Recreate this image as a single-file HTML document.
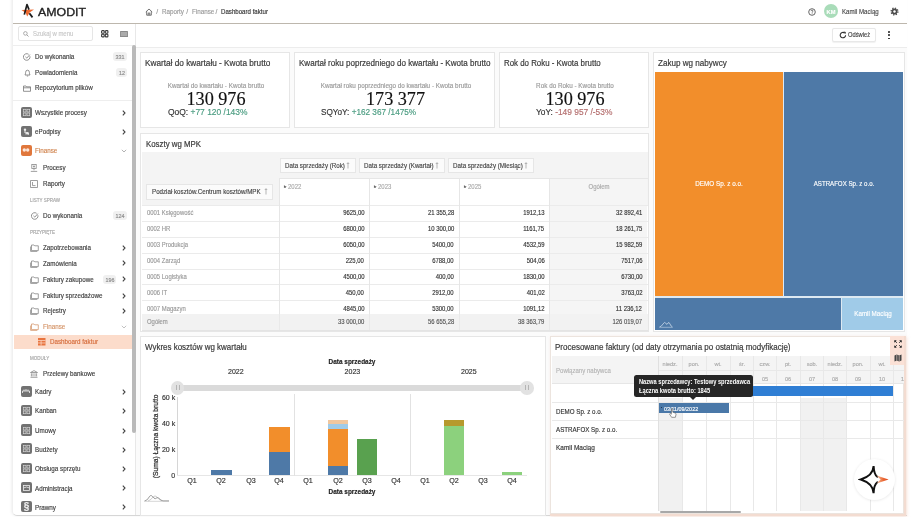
<!DOCTYPE html><html><head><meta charset="utf-8"><style>
html,body{margin:0;padding:0;width:920px;height:517px;overflow:hidden;background:#fff;font-family:"Liberation Sans",sans-serif;}
#root{position:relative;width:920px;height:517px;overflow:hidden;filter:blur(0.25px);}
#root div{-webkit-text-stroke:0.15px currentColor;}
</style></head><body><div id="root">
<div style="position:absolute;left:12px;top:-2px;width:895px;height:517.5px;background:#fff;border-left:1px solid #f0f0f0;border-bottom:1.2px solid #d6d6d6;border-radius:0 0 0 5px;box-sizing:border-box;box-shadow:-1px 0 2.5px rgba(0,0,0,0.06);"></div>
<div style="position:absolute;left:13px;top:22.9px;width:894px;height:1.1000000000000014px;background:#bdb7ad;"></div>
<svg style="position:absolute;left:18px;top:2px" width="18" height="18" viewBox="0 0 18 18">
<polygon points="3.4,8 16,7.4 11.6,10.6 9.2,14.4 7.6,10.8" fill="#ee6a30"/>
<path d="M6.3 12.6 L9 2.5 L11 7.6" stroke="#1d1d1d" stroke-width="1.7" fill="none" stroke-linejoin="round"/>
<path d="M11.4 11.3 L14.5 15.4" stroke="#1d1d1d" stroke-width="1.8" fill="none"/>
</svg>
<div style="position:absolute;left:37.6px;top:7.68px;font-size:10.3px;line-height:10.3px;color:#222;font-weight:400;white-space:nowrap;font-family:'Liberation Sans', sans-serif;transform:scaleX(1.2);transform-origin:left center;-webkit-text-stroke:0.3px #222;">AMODIT</div>
<svg style="position:absolute;left:144.5px;top:7.5px" width="8" height="8" viewBox="0 0 8 8">
<path d="M0.8 4 L4 1 L7.2 4 M1.7 3.3 V7.2 H6.3 V3.3 M3.2 7.2 V5 H4.8 V7.2" stroke="#666" stroke-width="0.9" fill="none"/></svg>
<div style="position:absolute;left:156.2px;top:8.68px;font-size:6.8px;line-height:6.8px;color:#9a9a9a;font-weight:400;white-space:nowrap;font-family:'Liberation Sans', sans-serif;">/</div>
<div style="position:absolute;left:161.8px;top:8.68px;font-size:6.8px;line-height:6.8px;color:#9a9a9a;font-weight:400;white-space:nowrap;font-family:'Liberation Sans', sans-serif;transform:scaleX(0.92);transform-origin:left center;">Raporty</div>
<div style="position:absolute;left:186.3px;top:8.68px;font-size:6.8px;line-height:6.8px;color:#9a9a9a;font-weight:400;white-space:nowrap;font-family:'Liberation Sans', sans-serif;">/</div>
<div style="position:absolute;left:191.7px;top:8.68px;font-size:6.8px;line-height:6.8px;color:#9a9a9a;font-weight:400;white-space:nowrap;font-family:'Liberation Sans', sans-serif;transform:scaleX(0.92);transform-origin:left center;">Finanse</div>
<div style="position:absolute;left:215.6px;top:8.68px;font-size:6.8px;line-height:6.8px;color:#9a9a9a;font-weight:400;white-space:nowrap;font-family:'Liberation Sans', sans-serif;">/</div>
<div style="position:absolute;left:220.7px;top:8.68px;font-size:6.8px;line-height:6.8px;color:#333;font-weight:400;white-space:nowrap;font-family:'Liberation Sans', sans-serif;transform:scaleX(0.9);transform-origin:left center;">Dashboard faktur</div>
<svg style="position:absolute;left:808px;top:7.5px" width="8" height="8" viewBox="0 0 8 8">
<circle cx="4" cy="4" r="3.3" stroke="#555" stroke-width="0.9" fill="none"/><path d="M3 3.1 Q3 2.2 4 2.2 Q5 2.2 5 3 Q5 3.6 4.2 4 V4.6" stroke="#555" stroke-width="0.8" fill="none"/><circle cx="4.1" cy="5.8" r="0.45" fill="#555"/></svg>
<div style="position:absolute;left:823.8px;top:4.3px;width:14.0px;height:14.0px;background:#a9dcb9;border-radius:50%;"></div>
<div style="position:absolute;left:830.8px;top:8.90px;font-size:6px;line-height:6px;color:#fff;font-weight:700;white-space:nowrap;font-family:'Liberation Sans', sans-serif;transform:translateX(-50%) scaleX(0.95);">KM</div>
<div style="position:absolute;left:842px;top:8.88px;font-size:6.8px;line-height:6.8px;color:#4a4a4a;font-weight:400;white-space:nowrap;font-family:'Liberation Sans', sans-serif;transform:scaleX(0.9);transform-origin:left center;">Kamil Maciąg</div>
<svg style="position:absolute;left:890px;top:7.4px" width="9" height="9" viewBox="0 0 9 9"><circle cx="4.5" cy="4.5" r="3.4" fill="none" stroke="#4a4a4a" stroke-width="1.3" stroke-dasharray="1.3 1.37"/><circle cx="4.5" cy="4.5" r="2.9" fill="#4a4a4a"/><circle cx="4.5" cy="4.5" r="1.2" fill="#fff"/></svg>
<div style="position:absolute;left:17.5px;top:26.3px;width:75.5px;height:14.7px;border:1px solid #e6e6e6;border-radius:2px;box-sizing:border-box;background:#fff;"></div>
<svg style="position:absolute;left:22.5px;top:30.5px" width="6" height="6" viewBox="0 0 6 6"><circle cx="2.4" cy="2.4" r="1.8" stroke="#999" stroke-width="0.8" fill="none"/><path d="M3.7 3.7 L5.5 5.5" stroke="#999" stroke-width="0.9"/></svg>
<div style="position:absolute;left:33px;top:31.36px;font-size:6.6px;line-height:6.6px;color:#c8c8c8;font-weight:400;white-space:nowrap;font-family:'Liberation Sans', sans-serif;transform:scaleX(0.9);transform-origin:left center;">Szukaj w menu</div>
<svg style="position:absolute;left:101.2px;top:30.2px" width="7.5" height="7.5" viewBox="0 0 7.5 7.5"><rect x="0.6" y="0.6" width="2.6" height="2.6" rx="0.7" stroke="#3a3a3a" stroke-width="1.1" fill="none"/><rect x="4.3" y="0.6" width="2.6" height="2.6" rx="0.7" stroke="#3a3a3a" stroke-width="1.1" fill="none"/><rect x="0.6" y="4.3" width="2.6" height="2.6" rx="0.7" stroke="#3a3a3a" stroke-width="1.1" fill="none"/><rect x="4.3" y="4.3" width="2.6" height="2.6" rx="0.7" stroke="#3a3a3a" stroke-width="1.1" fill="none"/></svg>
<svg style="position:absolute;left:119.5px;top:31px" width="8" height="6" viewBox="0 0 8 6"><rect x="0" y="0" width="8" height="6" rx="0.6" fill="#8a8a8a"/><path d="M0.8 2 H7.2 M0.8 4 H7.2" stroke="#e8e8e8" stroke-width="0.7"/></svg>
<div style="position:absolute;left:13px;top:44.6px;width:122px;height:0.7999999999999972px;background:#eee;"></div>
<div style="position:absolute;left:135px;top:24px;width:1px;height:491px;background:#e8e8e8;"></div>
<div style="position:absolute;left:132px;top:45.4px;width:3.5px;height:387.6px;background:#b9b9b9;border-radius:2px;"></div>
<svg style="position:absolute;left:23px;top:52.800000000000004px" width="8" height="8" viewBox="0 0 8 8"><path d="M6.9 3.2 A3.3 3.3 0 1 1 5.6 1.3" stroke="#777" stroke-width="0.8" fill="none"/><path d="M2.4 3.8 L3.8 5.1 L6.9 1.6" stroke="#777" stroke-width="0.8" fill="none"/></svg>
<div style="position:absolute;left:34.7px;top:53.88px;font-size:6.8px;line-height:6.8px;color:#3c3c3c;font-weight:400;white-space:nowrap;font-family:'Liberation Sans', sans-serif;transform:scaleX(0.92);transform-origin:left center;">Do wykonania</div>
<div style="position:absolute;left:113px;top:52.1px;width:14px;height:9.0px;background:#f0f0f0;border-radius:3px;"></div>
<div style="position:absolute;left:120.0px;top:54.20px;font-size:6px;line-height:6px;color:#8a8a8a;font-weight:400;white-space:nowrap;font-family:'Liberation Sans', sans-serif;transform:translateX(-50%) scaleX(0.9);">331</div>
<svg style="position:absolute;left:23.5px;top:68.8px" width="7" height="8" viewBox="0 0 7 8"><path d="M1 6 Q1.6 5 1.6 3.4 Q1.6 1.2 3.5 1.2 Q5.4 1.2 5.4 3.4 Q5.4 5 6 6 Z M2.8 7 H4.2" stroke="#777" stroke-width="0.8" fill="none"/></svg>
<div style="position:absolute;left:34.7px;top:69.88px;font-size:6.8px;line-height:6.8px;color:#3c3c3c;font-weight:400;white-space:nowrap;font-family:'Liberation Sans', sans-serif;transform:scaleX(0.92);transform-origin:left center;">Powiadomienia</div>
<div style="position:absolute;left:116px;top:68.1px;width:11px;height:9.0px;background:#f0f0f0;border-radius:3px;"></div>
<div style="position:absolute;left:121.5px;top:70.20px;font-size:6px;line-height:6px;color:#8a8a8a;font-weight:400;white-space:nowrap;font-family:'Liberation Sans', sans-serif;transform:translateX(-50%) scaleX(0.9);">12</div>
<svg style="position:absolute;left:23px;top:85px" width="8" height="7" viewBox="0 0 8 7"><path d="M0.5 1 H3 L3.7 1.8 H7.5 V6.3 H0.5 Z M0.5 2.8 H7.5" stroke="#777" stroke-width="0.8" fill="none"/></svg>
<div style="position:absolute;left:34.7px;top:85.48px;font-size:6.8px;line-height:6.8px;color:#3c3c3c;font-weight:400;white-space:nowrap;font-family:'Liberation Sans', sans-serif;transform:scaleX(0.92);transform-origin:left center;">Repozytorium plików</div>
<div style="position:absolute;left:13px;top:99.8px;width:119px;height:0.7999999999999972px;background:#eee;"></div>
<div style="position:absolute;left:20.9px;top:106.7px;width:11.2px;height:11.2px;background:#727272;border-radius:2px;"></div>
<svg style="position:absolute;left:23.0px;top:108.8px" width="7" height="7" viewBox="0 0 7 7"><rect x="0.3" y="0.3" width="2.7" height="2.7" stroke="#ddd" stroke-width="0.6" fill="none"/><rect x="4" y="0.3" width="2.7" height="2.7" stroke="#ddd" stroke-width="0.6" fill="none"/><rect x="0.3" y="4" width="2.7" height="2.7" stroke="#ddd" stroke-width="0.6" fill="none"/><rect x="4" y="4" width="2.7" height="2.7" stroke="#ddd" stroke-width="0.6" fill="none"/></svg>
<div style="position:absolute;left:34.7px;top:110.28px;font-size:6.8px;line-height:6.8px;color:#3c3c3c;font-weight:400;white-space:nowrap;font-family:'Liberation Sans', sans-serif;transform:scaleX(0.92);transform-origin:left center;">Wszystkie procesy</div>
<svg style="position:absolute;left:122.3px;top:110px" width="4" height="6" viewBox="0 0 4 6"><path d="M0.8 0.7 L3 3 L0.8 5.3" stroke="#444" stroke-width="1.1" fill="none"/></svg>
<div style="position:absolute;left:20.9px;top:125.70000000000002px;width:11.2px;height:11.2px;background:#727272;border-radius:2px;"></div>
<svg style="position:absolute;left:22.9px;top:127.50000000000001px" width="7" height="8" viewBox="0 0 7 8"><circle cx="2" cy="1.8" r="1.2" fill="#eee"/><path d="M1 4 H3 V6.5 M3 4.5 L6 6.5" stroke="#eee" stroke-width="1" fill="none"/><circle cx="4.6" cy="5.3" r="1.2" fill="#eee"/></svg>
<div style="position:absolute;left:34.7px;top:129.28px;font-size:6.8px;line-height:6.8px;color:#3c3c3c;font-weight:400;white-space:nowrap;font-family:'Liberation Sans', sans-serif;transform:scaleX(0.92);transform-origin:left center;">ePodpisy</div>
<svg style="position:absolute;left:122.3px;top:129px" width="4" height="6" viewBox="0 0 4 6"><path d="M0.8 0.7 L3 3 L0.8 5.3" stroke="#444" stroke-width="1.1" fill="none"/></svg>
<div style="position:absolute;left:20.9px;top:144.70000000000002px;width:11.2px;height:11.2px;background:#e0773c;border-radius:2px;"></div>
<svg style="position:absolute;left:22.4px;top:147.3px" width="8" height="6" viewBox="0 0 8 6"><circle cx="2.3" cy="3" r="1.7" fill="#fde7da"/><circle cx="5.7" cy="3" r="1.7" fill="#fde7da"/></svg>
<div style="position:absolute;left:34.7px;top:148.28px;font-size:6.8px;line-height:6.8px;color:#d0844f;font-weight:400;white-space:nowrap;font-family:'Liberation Sans', sans-serif;transform:scaleX(0.92);transform-origin:left center;">Finanse</div>
<svg style="position:absolute;left:121.3px;top:149px" width="6" height="4" viewBox="0 0 6 4"><path d="M0.8 0.8 L3 3 L5.2 0.8" stroke="#aaa" stroke-width="0.9" fill="none"/></svg>
<svg style="position:absolute;left:30px;top:164.2px" width="8" height="8" viewBox="0 0 8 8"><rect x="1.8" y="0.5" width="4.4" height="4" stroke="#888" stroke-width="0.8" fill="none"/><path d="M4 4.5 V6.3 M0.8 7.4 H7.2" stroke="#888" stroke-width="0.8"/><circle cx="4" cy="2.5" r="0.9" fill="#888"/></svg>
<div style="position:absolute;left:42.6px;top:165.48px;font-size:6.8px;line-height:6.8px;color:#3c3c3c;font-weight:400;white-space:nowrap;font-family:'Liberation Sans', sans-serif;transform:scaleX(0.92);transform-origin:left center;">Procesy</div>
<svg style="position:absolute;left:30px;top:179.8px" width="8" height="8" viewBox="0 0 8 8"><rect x="0.6" y="0.6" width="6.8" height="6.8" stroke="#888" stroke-width="0.8" fill="none"/><path d="M2.5 2 V5.6 H5.5" stroke="#888" stroke-width="0.8" fill="none"/></svg>
<div style="position:absolute;left:42.6px;top:181.08px;font-size:6.8px;line-height:6.8px;color:#3c3c3c;font-weight:400;white-space:nowrap;font-family:'Liberation Sans', sans-serif;transform:scaleX(0.92);transform-origin:left center;">Raporty</div>
<div style="position:absolute;left:30px;top:197.70px;font-size:5px;line-height:5px;color:#a5a5a5;font-weight:400;white-space:nowrap;font-family:'Liberation Sans', sans-serif;transform:scaleX(0.9);transform-origin:left center;">LISTY SPRAW</div>
<svg style="position:absolute;left:30.5px;top:211.89999999999998px" width="8" height="8" viewBox="0 0 8 8"><path d="M6.9 3.2 A3.3 3.3 0 1 1 5.6 1.3" stroke="#777" stroke-width="0.8" fill="none"/><path d="M2.4 3.8 L3.8 5.1 L6.9 1.6" stroke="#777" stroke-width="0.8" fill="none"/></svg>
<div style="position:absolute;left:42.6px;top:212.98px;font-size:6.8px;line-height:6.8px;color:#3c3c3c;font-weight:400;white-space:nowrap;font-family:'Liberation Sans', sans-serif;transform:scaleX(0.92);transform-origin:left center;">Do wykonania</div>
<div style="position:absolute;left:113px;top:211.2px;width:14px;height:9.0px;background:#f0f0f0;border-radius:3px;"></div>
<div style="position:absolute;left:120.0px;top:213.30px;font-size:6px;line-height:6px;color:#8a8a8a;font-weight:400;white-space:nowrap;font-family:'Liberation Sans', sans-serif;transform:translateX(-50%) scaleX(0.9);">124</div>
<div style="position:absolute;left:30px;top:229.50px;font-size:5px;line-height:5px;color:#a5a5a5;font-weight:400;white-space:nowrap;font-family:'Liberation Sans', sans-serif;transform:scaleX(0.9);transform-origin:left center;">PRZYPIĘTE</div>
<svg style="position:absolute;left:29.5px;top:243.7px" width="9" height="8" viewBox="0 0 9 8"><path d="M1.5 1 H4 L4.8 1.8 H8.3 V6.6 H1.5 Z" stroke="#888" stroke-width="0.8" fill="none"/><path d="M0.6 2.5 V7.4 H7.3" stroke="#888" stroke-width="0.8" fill="none"/></svg>
<div style="position:absolute;left:42.6px;top:244.78px;font-size:6.8px;line-height:6.8px;color:#3c3c3c;font-weight:400;white-space:nowrap;font-family:'Liberation Sans', sans-serif;transform:scaleX(0.92);transform-origin:left center;">Zapotrzebowania</div>
<svg style="position:absolute;left:122.3px;top:244.5px" width="4" height="6" viewBox="0 0 4 6"><path d="M0.8 0.7 L3 3 L0.8 5.3" stroke="#444" stroke-width="1.1" fill="none"/></svg>
<svg style="position:absolute;left:29.5px;top:259.59999999999997px" width="9" height="8" viewBox="0 0 9 8"><path d="M1.5 1 H4 L4.8 1.8 H8.3 V6.6 H1.5 Z" stroke="#888" stroke-width="0.8" fill="none"/><path d="M0.6 2.5 V7.4 H7.3" stroke="#888" stroke-width="0.8" fill="none"/></svg>
<div style="position:absolute;left:42.6px;top:260.68px;font-size:6.8px;line-height:6.8px;color:#3c3c3c;font-weight:400;white-space:nowrap;font-family:'Liberation Sans', sans-serif;transform:scaleX(0.92);transform-origin:left center;">Zamówienia</div>
<svg style="position:absolute;left:122.3px;top:260.4px" width="4" height="6" viewBox="0 0 4 6"><path d="M0.8 0.7 L3 3 L0.8 5.3" stroke="#444" stroke-width="1.1" fill="none"/></svg>
<svg style="position:absolute;left:29.5px;top:275.5px" width="9" height="8" viewBox="0 0 9 8"><path d="M1.5 1 H4 L4.8 1.8 H8.3 V6.6 H1.5 Z" stroke="#888" stroke-width="0.8" fill="none"/><path d="M0.6 2.5 V7.4 H7.3" stroke="#888" stroke-width="0.8" fill="none"/></svg>
<div style="position:absolute;left:42.6px;top:276.58px;font-size:6.8px;line-height:6.8px;color:#3c3c3c;font-weight:400;white-space:nowrap;font-family:'Liberation Sans', sans-serif;transform:scaleX(0.92);transform-origin:left center;">Faktury zakupowe</div>
<svg style="position:absolute;left:122.3px;top:276.3px" width="4" height="6" viewBox="0 0 4 6"><path d="M0.8 0.7 L3 3 L0.8 5.3" stroke="#444" stroke-width="1.1" fill="none"/></svg>
<svg style="position:absolute;left:29.5px;top:291.8px" width="9" height="8" viewBox="0 0 9 8"><path d="M1.5 1 H4 L4.8 1.8 H8.3 V6.6 H1.5 Z" stroke="#888" stroke-width="0.8" fill="none"/><path d="M0.6 2.5 V7.4 H7.3" stroke="#888" stroke-width="0.8" fill="none"/></svg>
<div style="position:absolute;left:42.6px;top:292.88px;font-size:6.8px;line-height:6.8px;color:#3c3c3c;font-weight:400;white-space:nowrap;font-family:'Liberation Sans', sans-serif;transform:scaleX(0.92);transform-origin:left center;">Faktury sprzedażowe</div>
<svg style="position:absolute;left:122.3px;top:292.6px" width="4" height="6" viewBox="0 0 4 6"><path d="M0.8 0.7 L3 3 L0.8 5.3" stroke="#444" stroke-width="1.1" fill="none"/></svg>
<svg style="position:absolute;left:29.5px;top:307.4px" width="9" height="8" viewBox="0 0 9 8"><path d="M1.5 1 H4 L4.8 1.8 H8.3 V6.6 H1.5 Z" stroke="#888" stroke-width="0.8" fill="none"/><path d="M0.6 2.5 V7.4 H7.3" stroke="#888" stroke-width="0.8" fill="none"/></svg>
<div style="position:absolute;left:42.6px;top:308.48px;font-size:6.8px;line-height:6.8px;color:#3c3c3c;font-weight:400;white-space:nowrap;font-family:'Liberation Sans', sans-serif;transform:scaleX(0.92);transform-origin:left center;">Rejestry</div>
<svg style="position:absolute;left:122.3px;top:308.2px" width="4" height="6" viewBox="0 0 4 6"><path d="M0.8 0.7 L3 3 L0.8 5.3" stroke="#444" stroke-width="1.1" fill="none"/></svg>
<div style="position:absolute;left:102.7px;top:274.8px;width:13.599999999999994px;height:9.0px;background:#f0f0f0;border-radius:3px;"></div>
<div style="position:absolute;left:109.5px;top:276.90px;font-size:6px;line-height:6px;color:#8a8a8a;font-weight:400;white-space:nowrap;font-family:'Liberation Sans', sans-serif;transform:translateX(-50%) scaleX(0.9);">196</div>
<svg style="position:absolute;left:29.5px;top:323.3px" width="9" height="8" viewBox="0 0 9 8"><path d="M1.5 1 H4 L4.8 1.8 H8.3 V6.6 H1.5 Z" stroke="#d69a72" stroke-width="0.8" fill="none"/><path d="M0.6 2.5 V7.4 H7.3" stroke="#d69a72" stroke-width="0.8" fill="none"/></svg>
<div style="position:absolute;left:42.6px;top:324.38px;font-size:6.8px;line-height:6.8px;color:#d49468;font-weight:400;white-space:nowrap;font-family:'Liberation Sans', sans-serif;transform:scaleX(0.92);transform-origin:left center;">Finanse</div>
<svg style="position:absolute;left:121.3px;top:325.1px" width="6" height="4" viewBox="0 0 6 4"><path d="M0.8 0.8 L3 3 L5.2 0.8" stroke="#bbb" stroke-width="0.9" fill="none"/></svg>
<div style="position:absolute;left:13.5px;top:334.6px;width:118.0px;height:14.399999999999977px;background:#fcdccb;"></div>
<svg style="position:absolute;left:38px;top:338px" width="7.5" height="7.5" viewBox="0 0 8 8"><rect x="0" y="0" width="8" height="8" fill="#e8743f"/><path d="M0 2.7 H8 M0 5.3 H8 M3.3 2.7 V8" stroke="#fcdccb" stroke-width="0.8"/></svg>
<div style="position:absolute;left:49.7px;top:339.28px;font-size:6.8px;line-height:6.8px;color:#d56b3a;font-weight:400;white-space:nowrap;font-family:'Liberation Sans', sans-serif;transform:scaleX(0.92);transform-origin:left center;">Dashboard faktur</div>
<div style="position:absolute;left:30px;top:355.90px;font-size:5px;line-height:5px;color:#a5a5a5;font-weight:400;white-space:nowrap;font-family:'Liberation Sans', sans-serif;transform:scaleX(0.9);transform-origin:left center;">MODUŁY</div>
<svg style="position:absolute;left:30px;top:370px" width="8" height="8" viewBox="0 0 8 8"><path d="M0.5 2.5 L4 0.6 L7.5 2.5 Z M1.4 3.3 V6.4 M3 3.3 V6.4 M5 3.3 V6.4 M6.6 3.3 V6.4 M0.5 7.3 H7.5" stroke="#888" stroke-width="0.8" fill="none"/></svg>
<div style="position:absolute;left:42.6px;top:371.48px;font-size:6.8px;line-height:6.8px;color:#3c3c3c;font-weight:400;white-space:nowrap;font-family:'Liberation Sans', sans-serif;transform:scaleX(0.92);transform-origin:left center;">Przelewy bankowe</div>
<div style="position:absolute;left:20.9px;top:385.59999999999997px;width:11.2px;height:11.2px;background:#727272;border-radius:2px;"></div>
<svg style="position:absolute;left:22.4px;top:388.2px" width="8" height="6" viewBox="0 0 8 6"><path d="M0.5 5 V3 H7.5 V5 M2 3 V1.5 M4 3 V1 M6 3 V1.5" stroke="#e5e5e5" stroke-width="0.9" fill="none"/></svg>
<div style="position:absolute;left:34.7px;top:389.18px;font-size:6.8px;line-height:6.8px;color:#3c3c3c;font-weight:400;white-space:nowrap;font-family:'Liberation Sans', sans-serif;transform:scaleX(0.92);transform-origin:left center;">Kadry</div>
<svg style="position:absolute;left:122.3px;top:388.9px" width="4" height="6" viewBox="0 0 4 6"><path d="M0.8 0.7 L3 3 L0.8 5.3" stroke="#444" stroke-width="1.1" fill="none"/></svg>
<div style="position:absolute;left:20.9px;top:404.9px;width:11.2px;height:11.2px;background:#727272;border-radius:2px;"></div>
<svg style="position:absolute;left:23.0px;top:407.0px" width="7" height="7" viewBox="0 0 7 7"><rect x="0.3" y="0.3" width="2.7" height="2.7" stroke="#ddd" stroke-width="0.6" fill="none"/><rect x="4" y="0.3" width="2.7" height="2.7" stroke="#ddd" stroke-width="0.6" fill="none"/><rect x="0.3" y="4" width="2.7" height="2.7" stroke="#ddd" stroke-width="0.6" fill="none"/><rect x="4" y="4" width="2.7" height="2.7" stroke="#ddd" stroke-width="0.6" fill="none"/></svg>
<div style="position:absolute;left:34.7px;top:408.48px;font-size:6.8px;line-height:6.8px;color:#3c3c3c;font-weight:400;white-space:nowrap;font-family:'Liberation Sans', sans-serif;transform:scaleX(0.92);transform-origin:left center;">Kanban</div>
<svg style="position:absolute;left:122.3px;top:408.2px" width="4" height="6" viewBox="0 0 4 6"><path d="M0.8 0.7 L3 3 L0.8 5.3" stroke="#444" stroke-width="1.1" fill="none"/></svg>
<div style="position:absolute;left:20.9px;top:424.4px;width:11.2px;height:11.2px;background:#727272;border-radius:2px;"></div>
<svg style="position:absolute;left:23.0px;top:426.5px" width="7" height="7" viewBox="0 0 7 7"><rect x="0.3" y="0.3" width="2.7" height="2.7" stroke="#ddd" stroke-width="0.6" fill="none"/><rect x="4" y="0.3" width="2.7" height="2.7" stroke="#ddd" stroke-width="0.6" fill="none"/><rect x="0.3" y="4" width="2.7" height="2.7" stroke="#ddd" stroke-width="0.6" fill="none"/><rect x="4" y="4" width="2.7" height="2.7" stroke="#ddd" stroke-width="0.6" fill="none"/></svg>
<div style="position:absolute;left:34.7px;top:427.98px;font-size:6.8px;line-height:6.8px;color:#3c3c3c;font-weight:400;white-space:nowrap;font-family:'Liberation Sans', sans-serif;transform:scaleX(0.92);transform-origin:left center;">Umowy</div>
<svg style="position:absolute;left:122.3px;top:427.7px" width="4" height="6" viewBox="0 0 4 6"><path d="M0.8 0.7 L3 3 L0.8 5.3" stroke="#444" stroke-width="1.1" fill="none"/></svg>
<div style="position:absolute;left:20.9px;top:443.3px;width:11.2px;height:11.2px;background:#727272;border-radius:2px;"></div>
<svg style="position:absolute;left:23.0px;top:445.40000000000003px" width="7" height="7" viewBox="0 0 7 7"><rect x="0.3" y="0.3" width="2.7" height="2.7" stroke="#ddd" stroke-width="0.6" fill="none"/><rect x="4" y="0.3" width="2.7" height="2.7" stroke="#ddd" stroke-width="0.6" fill="none"/><rect x="0.3" y="4" width="2.7" height="2.7" stroke="#ddd" stroke-width="0.6" fill="none"/><rect x="4" y="4" width="2.7" height="2.7" stroke="#ddd" stroke-width="0.6" fill="none"/></svg>
<div style="position:absolute;left:34.7px;top:446.88px;font-size:6.8px;line-height:6.8px;color:#3c3c3c;font-weight:400;white-space:nowrap;font-family:'Liberation Sans', sans-serif;transform:scaleX(0.92);transform-origin:left center;">Budżety</div>
<svg style="position:absolute;left:122.3px;top:446.6px" width="4" height="6" viewBox="0 0 4 6"><path d="M0.8 0.7 L3 3 L0.8 5.3" stroke="#444" stroke-width="1.1" fill="none"/></svg>
<div style="position:absolute;left:20.9px;top:462.7px;width:11.2px;height:11.2px;background:#727272;border-radius:2px;"></div>
<svg style="position:absolute;left:23.0px;top:464.8px" width="7" height="7" viewBox="0 0 7 7"><rect x="0.3" y="0.3" width="2.7" height="2.7" stroke="#ddd" stroke-width="0.6" fill="none"/><rect x="4" y="0.3" width="2.7" height="2.7" stroke="#ddd" stroke-width="0.6" fill="none"/><rect x="0.3" y="4" width="2.7" height="2.7" stroke="#ddd" stroke-width="0.6" fill="none"/><rect x="4" y="4" width="2.7" height="2.7" stroke="#ddd" stroke-width="0.6" fill="none"/></svg>
<div style="position:absolute;left:34.7px;top:466.28px;font-size:6.8px;line-height:6.8px;color:#3c3c3c;font-weight:400;white-space:nowrap;font-family:'Liberation Sans', sans-serif;transform:scaleX(0.92);transform-origin:left center;">Obsługa sprzętu</div>
<svg style="position:absolute;left:122.3px;top:466px" width="4" height="6" viewBox="0 0 4 6"><path d="M0.8 0.7 L3 3 L0.8 5.3" stroke="#444" stroke-width="1.1" fill="none"/></svg>
<div style="position:absolute;left:20.9px;top:482.0px;width:11.2px;height:11.2px;background:#727272;border-radius:2px;"></div>
<svg style="position:absolute;left:22.9px;top:484.6px" width="7" height="6" viewBox="0 0 7 6"><rect x="0.5" y="0.5" width="6" height="5" stroke="#eee" stroke-width="0.8" fill="none"/><path d="M0.5 3 L3.5 2 L6.5 3" stroke="#eee" stroke-width="0.8" fill="none"/></svg>
<div style="position:absolute;left:34.7px;top:485.58px;font-size:6.8px;line-height:6.8px;color:#3c3c3c;font-weight:400;white-space:nowrap;font-family:'Liberation Sans', sans-serif;transform:scaleX(0.92);transform-origin:left center;">Administracja</div>
<svg style="position:absolute;left:122.3px;top:485.3px" width="4" height="6" viewBox="0 0 4 6"><path d="M0.8 0.7 L3 3 L0.8 5.3" stroke="#444" stroke-width="1.1" fill="none"/></svg>
<div style="position:absolute;left:20.9px;top:501.09999999999997px;width:11.2px;height:11.2px;background:#727272;border-radius:2px;"></div>
<div style="position:absolute;left:20.9px;top:501.09999999999997px;width:11.2px;height:11.2px;color:#f2f2f2;font-size:10px;line-height:11.2px;text-align:center;font-family:'Liberation Sans', sans-serif;font-weight:700">§</div>
<div style="position:absolute;left:34.7px;top:504.68px;font-size:6.8px;line-height:6.8px;color:#3c3c3c;font-weight:400;white-space:nowrap;font-family:'Liberation Sans', sans-serif;transform:scaleX(0.92);transform-origin:left center;">Prawny</div>
<svg style="position:absolute;left:122.3px;top:504.4px" width="4" height="6" viewBox="0 0 4 6"><path d="M0.8 0.7 L3 3 L0.8 5.3" stroke="#444" stroke-width="1.1" fill="none"/></svg>
<div style="position:absolute;left:136px;top:47.2px;width:771px;height:0.7999999999999972px;background:#ececec;"></div>
<div style="position:absolute;left:136px;top:48px;width:771px;height:467px;background:#fbfbfb;"></div>
<div style="position:absolute;left:831.5px;top:27.8px;width:44.799999999999955px;height:14.2px;border:1px solid #e8e8e8;border-radius:2px;box-sizing:border-box;background:#fff;box-shadow:0 0.5px 1px rgba(0,0,0,0.06);"></div>
<svg style="position:absolute;left:838.5px;top:31px" width="8" height="8" viewBox="0 0 8 8"><path d="M6.6 4.2 A2.7 2.7 0 1 1 5.6 2" stroke="#333" stroke-width="1.1" fill="none"/><path d="M4.6 0.6 L6.9 1.1 L6.3 3.3 Z" fill="#333"/></svg>
<div style="position:absolute;left:847.9px;top:32.28px;font-size:6.8px;line-height:6.8px;color:#444;font-weight:400;white-space:nowrap;font-family:'Liberation Sans', sans-serif;transform:scaleX(0.85);transform-origin:left center;">Odśwież</div>
<div style="position:absolute;left:888.4px;top:30.900000000000002px;width:1.8000000000000682px;height:1.8000000000000007px;background:#222;border-radius:50%;"></div>
<div style="position:absolute;left:888.4px;top:34.300000000000004px;width:1.8000000000000682px;height:1.7999999999999972px;background:#222;border-radius:50%;"></div>
<div style="position:absolute;left:888.4px;top:37.7px;width:1.8000000000000682px;height:1.7999999999999972px;background:#222;border-radius:50%;"></div>
<div style="position:absolute;left:140px;top:52px;width:150px;height:76px;background:#fff;border:1px solid #e6e6e6;box-sizing:border-box;"></div>
<div style="position:absolute;left:144.5px;top:58.68px;font-size:9.3px;line-height:9.3px;color:#3a3a3a;font-weight:400;white-space:nowrap;font-family:'Liberation Sans', sans-serif;transform:scaleX(0.885);transform-origin:left center;-webkit-text-stroke:0.2px currentColor;">Kwartał do kwartału - Kwota brutto</div>
<div style="position:absolute;left:216.0px;top:82.86px;font-size:6.6px;line-height:6.6px;color:#9a9a9a;font-weight:400;white-space:nowrap;font-family:'Liberation Sans', sans-serif;transform:translateX(-50%) scaleX(0.96);">Kwartał do kwartału - Kwota brutto</div>
<div style="position:absolute;left:216.0px;top:90.32px;font-size:18.2px;line-height:18.2px;color:#111;font-weight:400;white-space:nowrap;font-family:'Liberation Serif', serif;transform:translateX(-50%) scaleX(1.0);">130 976</div>
<div style="position:absolute;left:167.8px;top:108.72px;font-size:8.2px;line-height:8.2px;color:#4a9c80;font-weight:400;white-space:nowrap;font-family:'Liberation Sans', sans-serif;transform:scaleX(1.03);transform-origin:left center;"><span style="color:#333">QoQ:</span> +77 120 /143%</div>
<div style="position:absolute;left:294px;top:52px;width:201px;height:76px;background:#fff;border:1px solid #e6e6e6;box-sizing:border-box;"></div>
<div style="position:absolute;left:298.5px;top:58.68px;font-size:9.3px;line-height:9.3px;color:#3a3a3a;font-weight:400;white-space:nowrap;font-family:'Liberation Sans', sans-serif;transform:scaleX(0.866);transform-origin:left center;-webkit-text-stroke:0.2px currentColor;">Kwartał roku poprzedniego do kwartału - Kwota brutto</div>
<div style="position:absolute;left:395.5px;top:82.86px;font-size:6.6px;line-height:6.6px;color:#9a9a9a;font-weight:400;white-space:nowrap;font-family:'Liberation Sans', sans-serif;transform:translateX(-50%) scaleX(0.96);">Kwartał roku poprzedniego do kwartału - Kwota brutto</div>
<div style="position:absolute;left:395.5px;top:90.32px;font-size:18.2px;line-height:18.2px;color:#111;font-weight:400;white-space:nowrap;font-family:'Liberation Serif', serif;transform:translateX(-50%) scaleX(1.0);">173 377</div>
<div style="position:absolute;left:321px;top:108.72px;font-size:8.2px;line-height:8.2px;color:#4a9c80;font-weight:400;white-space:nowrap;font-family:'Liberation Sans', sans-serif;"><span style="color:#333">SQYoY:</span> +162 367 /1475%</div>
<div style="position:absolute;left:499px;top:52px;width:150px;height:76px;background:#fff;border:1px solid #e6e6e6;box-sizing:border-box;"></div>
<div style="position:absolute;left:503.5px;top:58.68px;font-size:9.3px;line-height:9.3px;color:#3a3a3a;font-weight:400;white-space:nowrap;font-family:'Liberation Sans', sans-serif;transform:scaleX(0.847);transform-origin:left center;-webkit-text-stroke:0.2px currentColor;">Rok do Roku - Kwota brutto</div>
<div style="position:absolute;left:575.0px;top:82.86px;font-size:6.6px;line-height:6.6px;color:#9a9a9a;font-weight:400;white-space:nowrap;font-family:'Liberation Sans', sans-serif;transform:translateX(-50%) scaleX(0.96);">Rok do Roku - Kwota brutto</div>
<div style="position:absolute;left:575.0px;top:90.32px;font-size:18.2px;line-height:18.2px;color:#111;font-weight:400;white-space:nowrap;font-family:'Liberation Serif', serif;transform:translateX(-50%) scaleX(1.0);">130 976</div>
<div style="position:absolute;left:536.3px;top:108.72px;font-size:8.2px;line-height:8.2px;color:#b36c6c;font-weight:400;white-space:nowrap;font-family:'Liberation Sans', sans-serif;transform:scaleX(1.02);transform-origin:left center;"><span style="color:#333">YoY:</span> -149 957 /-53%</div>
<div style="position:absolute;left:653px;top:52px;width:252px;height:280px;background:#fff;border:1px solid #e6e6e6;box-sizing:border-box;"></div>
<div style="position:absolute;left:658.2px;top:58.68px;font-size:9.3px;line-height:9.3px;color:#3a3a3a;font-weight:400;white-space:nowrap;font-family:'Liberation Sans', sans-serif;transform:scaleX(0.87);transform-origin:left center;-webkit-text-stroke:0.2px currentColor;">Zakup wg nabywcy</div>
<div style="position:absolute;left:655.4px;top:71.5px;width:247.80000000000007px;height:258.9px;background:#dde9f2;"></div>
<div style="position:absolute;left:655.4px;top:71.5px;width:127.39999999999998px;height:224.60000000000002px;background:#f28e2b;"></div>
<div style="position:absolute;left:784.4px;top:71.5px;width:118.80000000000007px;height:224.60000000000002px;background:#4e79a7;"></div>
<div style="position:absolute;left:655.4px;top:297.7px;width:185.5px;height:32.69999999999999px;background:#4e79a7;"></div>
<div style="position:absolute;left:842.4px;top:297.7px;width:60.80000000000007px;height:32.69999999999999px;background:#a0cbe8;"></div>
<div style="position:absolute;left:719px;top:181.28px;font-size:6.8px;line-height:6.8px;color:#fff;font-weight:400;white-space:nowrap;font-family:'Liberation Sans', sans-serif;transform:translateX(-50%) scaleX(0.93);">DEMO Sp. z o.o.</div>
<div style="position:absolute;left:843.8px;top:181.28px;font-size:6.8px;line-height:6.8px;color:#fff;font-weight:400;white-space:nowrap;font-family:'Liberation Sans', sans-serif;transform:translateX(-50%) scaleX(0.9);">ASTRAFOX Sp. z o.o.</div>
<div style="position:absolute;left:872.8px;top:311.28px;font-size:6.8px;line-height:6.8px;color:#fff;font-weight:400;white-space:nowrap;font-family:'Liberation Sans', sans-serif;transform:translateX(-50%) scaleX(0.92);">Kamil Maciąg</div>
<svg style="position:absolute;left:659px;top:320px" width="14" height="8" viewBox="0 0 14 8"><path d="M0.5 7 Q2.5 6.5 4 4 Q5.5 1 7 3.5 Q8 5.5 9 3 Q10 1.5 11 4 Q12 6.5 13.5 7" stroke="#d8e4f0" stroke-width="0.7" fill="none"/><path d="M0.5 7.3 H13.5" stroke="#d8e4f0" stroke-width="0.5"/></svg>
<div style="position:absolute;left:140px;top:133px;width:509px;height:199px;background:#fff;border:1px solid #e6e6e6;box-sizing:border-box;"></div>
<div style="position:absolute;left:145.6px;top:139.68px;font-size:9.3px;line-height:9.3px;color:#3a3a3a;font-weight:400;white-space:nowrap;font-family:'Liberation Sans', sans-serif;transform:scaleX(0.845);transform-origin:left center;-webkit-text-stroke:0.2px currentColor;">Koszty wg MPK</div>
<div style="position:absolute;left:141.5px;top:152.4px;width:506.0px;height:52.599999999999994px;background:#f4f4f4;"></div>
<div style="position:absolute;left:279.5px;top:158px;width:76.10000000000002px;height:15.400000000000006px;background:#fbfbfb;border:1px solid #e6e6e6;box-sizing:border-box;"></div>
<div style="position:absolute;left:284.7px;top:162.98px;font-size:6.8px;line-height:6.8px;color:#444;font-weight:400;white-space:nowrap;font-family:'Liberation Sans', sans-serif;transform:scaleX(0.91);transform-origin:left center;">Data sprzedaży (Rok)</div>
<svg style="position:absolute;left:345.6px;top:161.7px" width="4" height="7" viewBox="0 0 4 7"><path d="M2 6.5 V0.8 M0.8 2 L2 0.7 L3.2 2" stroke="#888" stroke-width="0.6" fill="none"/></svg>
<div style="position:absolute;left:359px;top:158px;width:85.69999999999999px;height:15.400000000000006px;background:#fbfbfb;border:1px solid #e6e6e6;box-sizing:border-box;"></div>
<div style="position:absolute;left:364.2px;top:162.98px;font-size:6.8px;line-height:6.8px;color:#444;font-weight:400;white-space:nowrap;font-family:'Liberation Sans', sans-serif;transform:scaleX(0.91);transform-origin:left center;">Data sprzedaży (Kwartał)</div>
<svg style="position:absolute;left:434.7px;top:161.7px" width="4" height="7" viewBox="0 0 4 7"><path d="M2 6.5 V0.8 M0.8 2 L2 0.7 L3.2 2" stroke="#888" stroke-width="0.6" fill="none"/></svg>
<div style="position:absolute;left:447.6px;top:158px;width:86.79999999999995px;height:15.400000000000006px;background:#fbfbfb;border:1px solid #e6e6e6;box-sizing:border-box;"></div>
<div style="position:absolute;left:452.8px;top:162.98px;font-size:6.8px;line-height:6.8px;color:#444;font-weight:400;white-space:nowrap;font-family:'Liberation Sans', sans-serif;transform:scaleX(0.91);transform-origin:left center;">Data sprzedaży (Miesiąc)</div>
<svg style="position:absolute;left:524.4px;top:161.7px" width="4" height="7" viewBox="0 0 4 7"><path d="M2 6.5 V0.8 M0.8 2 L2 0.7 L3.2 2" stroke="#888" stroke-width="0.6" fill="none"/></svg>
<div style="position:absolute;left:146.4px;top:184px;width:127.1px;height:16.30000000000001px;background:#fbfbfb;border:1px solid #e6e6e6;box-sizing:border-box;"></div>
<div style="position:absolute;left:151.6px;top:189.43px;font-size:6.8px;line-height:6.8px;color:#444;font-weight:400;white-space:nowrap;font-family:'Liberation Sans', sans-serif;transform:scaleX(0.91);transform-origin:left center;">Podział kosztów.Centrum kosztów/MPK</div>
<svg style="position:absolute;left:263.5px;top:188.15px" width="4" height="7" viewBox="0 0 4 7"><path d="M2 6.5 V0.8 M0.8 2 L2 0.7 L3.2 2" stroke="#888" stroke-width="0.6" fill="none"/></svg>
<div style="position:absolute;left:279.5px;top:178.2px;width:270.29999999999995px;height:27.100000000000023px;background:#fff;"></div>
<div style="position:absolute;left:549.8px;top:178.2px;width:97.70000000000005px;height:152.40000000000003px;background:#f5f5f5;"></div>
<div style="position:absolute;left:279.5px;top:177.8px;width:368.0px;height:0.799999999999983px;background:#e6e6e6;"></div>
<div style="position:absolute;left:283.7px;top:185.00px;font-size:4.5px;line-height:4.5px;color:#666;font-weight:400;white-space:nowrap;font-family:'Liberation Sans', sans-serif;">▸</div>
<div style="position:absolute;left:288.1px;top:184.08px;font-size:6.8px;line-height:6.8px;color:#aaa;font-weight:400;white-space:nowrap;font-family:'Liberation Sans', sans-serif;transform:scaleX(0.88);transform-origin:left center;">2022</div>
<div style="position:absolute;left:373.7px;top:185.00px;font-size:4.5px;line-height:4.5px;color:#666;font-weight:400;white-space:nowrap;font-family:'Liberation Sans', sans-serif;">▸</div>
<div style="position:absolute;left:378.1px;top:184.08px;font-size:6.8px;line-height:6.8px;color:#aaa;font-weight:400;white-space:nowrap;font-family:'Liberation Sans', sans-serif;transform:scaleX(0.88);transform-origin:left center;">2023</div>
<div style="position:absolute;left:463.5px;top:185.00px;font-size:4.5px;line-height:4.5px;color:#666;font-weight:400;white-space:nowrap;font-family:'Liberation Sans', sans-serif;">▸</div>
<div style="position:absolute;left:467.90000000000003px;top:184.08px;font-size:6.8px;line-height:6.8px;color:#aaa;font-weight:400;white-space:nowrap;font-family:'Liberation Sans', sans-serif;transform:scaleX(0.88);transform-origin:left center;">2025</div>
<div style="position:absolute;left:598.6px;top:184.08px;font-size:6.8px;line-height:6.8px;color:#aaa;font-weight:400;white-space:nowrap;font-family:'Liberation Sans', sans-serif;transform:translateX(-50%) scaleX(0.88);">Ogółem</div>
<div style="position:absolute;left:141.5px;top:205.3px;width:408.29999999999995px;height:108.89999999999998px;background:#fff;"></div>
<div style="position:absolute;left:141.5px;top:204.9px;width:506.0px;height:0.8000000000000114px;background:#ebebeb;"></div>
<div style="position:absolute;left:141.5px;top:220.8px;width:506.0px;height:0.8000000000000114px;background:#ebebeb;"></div>
<div style="position:absolute;left:141.5px;top:236.70000000000002px;width:506.0px;height:0.8000000000000114px;background:#ebebeb;"></div>
<div style="position:absolute;left:141.5px;top:252.6px;width:506.0px;height:0.8000000000000114px;background:#ebebeb;"></div>
<div style="position:absolute;left:141.5px;top:268.50000000000006px;width:506.0px;height:0.7999999999999545px;background:#ebebeb;"></div>
<div style="position:absolute;left:141.5px;top:284.40000000000003px;width:506.0px;height:0.7999999999999545px;background:#ebebeb;"></div>
<div style="position:absolute;left:141.5px;top:300.30000000000007px;width:506.0px;height:0.7999999999999545px;background:#ebebeb;"></div>
<div style="position:absolute;left:279.05px;top:178.2px;width:0.8999999999999773px;height:152.2px;background:#e6e6e6;"></div>
<div style="position:absolute;left:369.05px;top:178.2px;width:0.8999999999999773px;height:152.2px;background:#e6e6e6;"></div>
<div style="position:absolute;left:458.85px;top:178.2px;width:0.8999999999999773px;height:152.2px;background:#e6e6e6;"></div>
<div style="position:absolute;left:549.3499999999999px;top:178.2px;width:0.900000000000091px;height:152.2px;background:#e6e6e6;"></div>
<div style="position:absolute;left:141.5px;top:314.2px;width:506.0px;height:16.19999999999999px;background:#f2f2f2;"></div>
<div style="position:absolute;left:279.05px;top:314.2px;width:0.8999999999999773px;height:16.19999999999999px;background:#e9e9e9;"></div>
<div style="position:absolute;left:369.05px;top:314.2px;width:0.8999999999999773px;height:16.19999999999999px;background:#e9e9e9;"></div>
<div style="position:absolute;left:458.85px;top:314.2px;width:0.8999999999999773px;height:16.19999999999999px;background:#e9e9e9;"></div>
<div style="position:absolute;left:549.3499999999999px;top:314.2px;width:0.900000000000091px;height:16.19999999999999px;background:#e9e9e9;"></div>
<div style="position:absolute;left:146.6px;top:210.48px;font-size:6.8px;line-height:6.8px;color:#999;font-weight:400;white-space:nowrap;font-family:'Liberation Sans', sans-serif;transform:scaleX(0.87);transform-origin:left center;">0001 Księgowość</div>
<div style="position:absolute;right:555.9px;top:210.48px;font-size:6.8px;line-height:6.8px;color:#333;font-weight:400;white-space:nowrap;font-family:'Liberation Sans', sans-serif;transform:scaleX(0.87);transform-origin:right center;">9625,00</div>
<div style="position:absolute;right:466.09999999999997px;top:210.48px;font-size:6.8px;line-height:6.8px;color:#333;font-weight:400;white-space:nowrap;font-family:'Liberation Sans', sans-serif;transform:scaleX(0.87);transform-origin:right center;">21 355,28</div>
<div style="position:absolute;right:375.6px;top:210.48px;font-size:6.8px;line-height:6.8px;color:#333;font-weight:400;white-space:nowrap;font-family:'Liberation Sans', sans-serif;transform:scaleX(0.87);transform-origin:right center;">1912,13</div>
<div style="position:absolute;right:277.9px;top:210.48px;font-size:6.8px;line-height:6.8px;color:#333;font-weight:400;white-space:nowrap;font-family:'Liberation Sans', sans-serif;transform:scaleX(0.87);transform-origin:right center;">32 892,41</div>
<div style="position:absolute;left:146.6px;top:226.38px;font-size:6.8px;line-height:6.8px;color:#999;font-weight:400;white-space:nowrap;font-family:'Liberation Sans', sans-serif;transform:scaleX(0.87);transform-origin:left center;">0002 HR</div>
<div style="position:absolute;right:555.9px;top:226.38px;font-size:6.8px;line-height:6.8px;color:#333;font-weight:400;white-space:nowrap;font-family:'Liberation Sans', sans-serif;transform:scaleX(0.87);transform-origin:right center;">6800,00</div>
<div style="position:absolute;right:466.09999999999997px;top:226.38px;font-size:6.8px;line-height:6.8px;color:#333;font-weight:400;white-space:nowrap;font-family:'Liberation Sans', sans-serif;transform:scaleX(0.87);transform-origin:right center;">10 300,00</div>
<div style="position:absolute;right:375.6px;top:226.38px;font-size:6.8px;line-height:6.8px;color:#333;font-weight:400;white-space:nowrap;font-family:'Liberation Sans', sans-serif;transform:scaleX(0.87);transform-origin:right center;">1161,75</div>
<div style="position:absolute;right:277.9px;top:226.38px;font-size:6.8px;line-height:6.8px;color:#333;font-weight:400;white-space:nowrap;font-family:'Liberation Sans', sans-serif;transform:scaleX(0.87);transform-origin:right center;">18 261,75</div>
<div style="position:absolute;left:146.6px;top:242.28px;font-size:6.8px;line-height:6.8px;color:#999;font-weight:400;white-space:nowrap;font-family:'Liberation Sans', sans-serif;transform:scaleX(0.87);transform-origin:left center;">0003 Produkcja</div>
<div style="position:absolute;right:555.9px;top:242.28px;font-size:6.8px;line-height:6.8px;color:#333;font-weight:400;white-space:nowrap;font-family:'Liberation Sans', sans-serif;transform:scaleX(0.87);transform-origin:right center;">6050,00</div>
<div style="position:absolute;right:466.09999999999997px;top:242.28px;font-size:6.8px;line-height:6.8px;color:#333;font-weight:400;white-space:nowrap;font-family:'Liberation Sans', sans-serif;transform:scaleX(0.87);transform-origin:right center;">5400,00</div>
<div style="position:absolute;right:375.6px;top:242.28px;font-size:6.8px;line-height:6.8px;color:#333;font-weight:400;white-space:nowrap;font-family:'Liberation Sans', sans-serif;transform:scaleX(0.87);transform-origin:right center;">4532,59</div>
<div style="position:absolute;right:277.9px;top:242.28px;font-size:6.8px;line-height:6.8px;color:#333;font-weight:400;white-space:nowrap;font-family:'Liberation Sans', sans-serif;transform:scaleX(0.87);transform-origin:right center;">15 982,59</div>
<div style="position:absolute;left:146.6px;top:258.18px;font-size:6.8px;line-height:6.8px;color:#999;font-weight:400;white-space:nowrap;font-family:'Liberation Sans', sans-serif;transform:scaleX(0.87);transform-origin:left center;">0004 Zarząd</div>
<div style="position:absolute;right:555.9px;top:258.18px;font-size:6.8px;line-height:6.8px;color:#333;font-weight:400;white-space:nowrap;font-family:'Liberation Sans', sans-serif;transform:scaleX(0.87);transform-origin:right center;">225,00</div>
<div style="position:absolute;right:466.09999999999997px;top:258.18px;font-size:6.8px;line-height:6.8px;color:#333;font-weight:400;white-space:nowrap;font-family:'Liberation Sans', sans-serif;transform:scaleX(0.87);transform-origin:right center;">6788,00</div>
<div style="position:absolute;right:375.6px;top:258.18px;font-size:6.8px;line-height:6.8px;color:#333;font-weight:400;white-space:nowrap;font-family:'Liberation Sans', sans-serif;transform:scaleX(0.87);transform-origin:right center;">504,06</div>
<div style="position:absolute;right:277.9px;top:258.18px;font-size:6.8px;line-height:6.8px;color:#333;font-weight:400;white-space:nowrap;font-family:'Liberation Sans', sans-serif;transform:scaleX(0.87);transform-origin:right center;">7517,06</div>
<div style="position:absolute;left:146.6px;top:274.08px;font-size:6.8px;line-height:6.8px;color:#999;font-weight:400;white-space:nowrap;font-family:'Liberation Sans', sans-serif;transform:scaleX(0.87);transform-origin:left center;">0005 Logistyka</div>
<div style="position:absolute;right:555.9px;top:274.08px;font-size:6.8px;line-height:6.8px;color:#333;font-weight:400;white-space:nowrap;font-family:'Liberation Sans', sans-serif;transform:scaleX(0.87);transform-origin:right center;">4500,00</div>
<div style="position:absolute;right:466.09999999999997px;top:274.08px;font-size:6.8px;line-height:6.8px;color:#333;font-weight:400;white-space:nowrap;font-family:'Liberation Sans', sans-serif;transform:scaleX(0.87);transform-origin:right center;">400,00</div>
<div style="position:absolute;right:375.6px;top:274.08px;font-size:6.8px;line-height:6.8px;color:#333;font-weight:400;white-space:nowrap;font-family:'Liberation Sans', sans-serif;transform:scaleX(0.87);transform-origin:right center;">1830,00</div>
<div style="position:absolute;right:277.9px;top:274.08px;font-size:6.8px;line-height:6.8px;color:#333;font-weight:400;white-space:nowrap;font-family:'Liberation Sans', sans-serif;transform:scaleX(0.87);transform-origin:right center;">6730,00</div>
<div style="position:absolute;left:146.6px;top:289.98px;font-size:6.8px;line-height:6.8px;color:#999;font-weight:400;white-space:nowrap;font-family:'Liberation Sans', sans-serif;transform:scaleX(0.87);transform-origin:left center;">0006 IT</div>
<div style="position:absolute;right:555.9px;top:289.98px;font-size:6.8px;line-height:6.8px;color:#333;font-weight:400;white-space:nowrap;font-family:'Liberation Sans', sans-serif;transform:scaleX(0.87);transform-origin:right center;">450,00</div>
<div style="position:absolute;right:466.09999999999997px;top:289.98px;font-size:6.8px;line-height:6.8px;color:#333;font-weight:400;white-space:nowrap;font-family:'Liberation Sans', sans-serif;transform:scaleX(0.87);transform-origin:right center;">2912,00</div>
<div style="position:absolute;right:375.6px;top:289.98px;font-size:6.8px;line-height:6.8px;color:#333;font-weight:400;white-space:nowrap;font-family:'Liberation Sans', sans-serif;transform:scaleX(0.87);transform-origin:right center;">401,02</div>
<div style="position:absolute;right:277.9px;top:289.98px;font-size:6.8px;line-height:6.8px;color:#333;font-weight:400;white-space:nowrap;font-family:'Liberation Sans', sans-serif;transform:scaleX(0.87);transform-origin:right center;">3763,02</div>
<div style="position:absolute;left:146.6px;top:305.88px;font-size:6.8px;line-height:6.8px;color:#999;font-weight:400;white-space:nowrap;font-family:'Liberation Sans', sans-serif;transform:scaleX(0.87);transform-origin:left center;">0007 Magazyn</div>
<div style="position:absolute;right:555.9px;top:305.88px;font-size:6.8px;line-height:6.8px;color:#333;font-weight:400;white-space:nowrap;font-family:'Liberation Sans', sans-serif;transform:scaleX(0.87);transform-origin:right center;">4845,00</div>
<div style="position:absolute;right:466.09999999999997px;top:305.88px;font-size:6.8px;line-height:6.8px;color:#333;font-weight:400;white-space:nowrap;font-family:'Liberation Sans', sans-serif;transform:scaleX(0.87);transform-origin:right center;">5300,00</div>
<div style="position:absolute;right:375.6px;top:305.88px;font-size:6.8px;line-height:6.8px;color:#333;font-weight:400;white-space:nowrap;font-family:'Liberation Sans', sans-serif;transform:scaleX(0.87);transform-origin:right center;">1091,12</div>
<div style="position:absolute;right:277.9px;top:305.88px;font-size:6.8px;line-height:6.8px;color:#333;font-weight:400;white-space:nowrap;font-family:'Liberation Sans', sans-serif;transform:scaleX(0.87);transform-origin:right center;">11 236,12</div>
<div style="position:absolute;left:146.6px;top:318.88px;font-size:6.8px;line-height:6.8px;color:#999;font-weight:400;white-space:nowrap;font-family:'Liberation Sans', sans-serif;transform:scaleX(0.87);transform-origin:left center;">Ogółem</div>
<div style="position:absolute;right:555.9px;top:318.88px;font-size:6.8px;line-height:6.8px;color:#555;font-weight:400;white-space:nowrap;font-family:'Liberation Sans', sans-serif;transform:scaleX(0.87);transform-origin:right center;">33 000,00</div>
<div style="position:absolute;right:466.09999999999997px;top:318.88px;font-size:6.8px;line-height:6.8px;color:#555;font-weight:400;white-space:nowrap;font-family:'Liberation Sans', sans-serif;transform:scaleX(0.87);transform-origin:right center;">56 655,28</div>
<div style="position:absolute;right:375.6px;top:318.88px;font-size:6.8px;line-height:6.8px;color:#555;font-weight:400;white-space:nowrap;font-family:'Liberation Sans', sans-serif;transform:scaleX(0.87);transform-origin:right center;">38 363,79</div>
<div style="position:absolute;right:277.9px;top:318.88px;font-size:6.8px;line-height:6.8px;color:#555;font-weight:400;white-space:nowrap;font-family:'Liberation Sans', sans-serif;transform:scaleX(0.87);transform-origin:right center;">126 019,07</div>
<div style="position:absolute;left:141.5px;top:330.2px;width:506.0px;height:0.8000000000000114px;background:#e4e4e4;"></div>
<div style="position:absolute;left:140px;top:336px;width:406px;height:180px;background:#fff;border:1px solid #e6e6e6;box-sizing:border-box;"></div>
<div style="position:absolute;left:145.3px;top:343.28px;font-size:9.3px;line-height:9.3px;color:#3a3a3a;font-weight:400;white-space:nowrap;font-family:'Liberation Sans', sans-serif;transform:scaleX(0.857);transform-origin:left center;-webkit-text-stroke:0.2px currentColor;">Wykres kosztów wg kwartału</div>
<div style="position:absolute;left:352.4px;top:357.90px;font-size:7px;line-height:7px;color:#222;font-weight:700;white-space:nowrap;font-family:'Liberation Sans', sans-serif;transform:translateX(-50%) scaleX(0.92);">Data sprzedaży</div>
<div style="position:absolute;left:235.8px;top:368.10px;font-size:7px;line-height:7px;color:#333;font-weight:400;white-space:nowrap;font-family:'Liberation Sans', sans-serif;transform:translateX(-50%) scaleX(1.0);">2022</div>
<div style="position:absolute;left:352.4px;top:368.10px;font-size:7px;line-height:7px;color:#333;font-weight:400;white-space:nowrap;font-family:'Liberation Sans', sans-serif;transform:translateX(-50%) scaleX(1.0);">2023</div>
<div style="position:absolute;left:468.8px;top:368.10px;font-size:7px;line-height:7px;color:#333;font-weight:400;white-space:nowrap;font-family:'Liberation Sans', sans-serif;transform:translateX(-50%) scaleX(1.0);">2025</div>
<div style="position:absolute;left:178px;top:385.4px;width:349px;height:5.2000000000000455px;background:#dadada;border-radius:3px;"></div>
<div style="position:absolute;left:170.79999999999998px;top:381.09999999999997px;width:13.6px;height:13.6px;border-radius:50%;background:#e2e2e2;"></div>
<div style="position:absolute;left:176.1px;top:385.3px;width:0.5999999999999943px;height:5.199999999999989px;background:#b5b5b5;"></div>
<div style="position:absolute;left:178.5px;top:385.3px;width:0.5999999999999943px;height:5.199999999999989px;background:#b5b5b5;"></div>
<div style="position:absolute;left:520.0px;top:381.09999999999997px;width:13.6px;height:13.6px;border-radius:50%;background:#e2e2e2;"></div>
<div style="position:absolute;left:525.3px;top:385.3px;width:0.6000000000000227px;height:5.199999999999989px;background:#b5b5b5;"></div>
<div style="position:absolute;left:527.6999999999999px;top:385.3px;width:0.6000000000000227px;height:5.199999999999989px;background:#b5b5b5;"></div>
<div style="position:absolute;left:116.1px;top:437.3px;width:80px;height:8px;font-size:7.2px;line-height:8px;text-align:center;color:#333;font-weight:400;-webkit-text-stroke:0.25px #333;white-space:nowrap;font-family:'Liberation Sans', sans-serif;transform:rotate(-90deg) scaleX(0.93);">(Suma) Łączna kwota brutto</div>
<div style="position:absolute;right:744.8px;top:394.20px;font-size:7px;line-height:7px;color:#333;font-weight:400;white-space:nowrap;font-family:'Liberation Sans', sans-serif;">60 k</div>
<div style="position:absolute;right:744.8px;top:420.20px;font-size:7px;line-height:7px;color:#333;font-weight:400;white-space:nowrap;font-family:'Liberation Sans', sans-serif;">40 k</div>
<div style="position:absolute;right:744.8px;top:446.00px;font-size:7px;line-height:7px;color:#333;font-weight:400;white-space:nowrap;font-family:'Liberation Sans', sans-serif;">20 k</div>
<div style="position:absolute;right:744.8px;top:472.40px;font-size:7px;line-height:7px;color:#333;font-weight:400;white-space:nowrap;font-family:'Liberation Sans', sans-serif;">0</div>
<div style="position:absolute;left:176.8px;top:396.5px;width:0.799999999999983px;height:79.5px;background:#d6d6d6;"></div>
<div style="position:absolute;left:177px;top:475.2px;width:350px;height:0.8000000000000114px;background:#e6e6e6;"></div>
<div style="position:absolute;left:294.0px;top:393.5px;width:0.7999999999999545px;height:82.0px;background:#e2e2e2;"></div>
<div style="position:absolute;left:410.1px;top:393.5px;width:0.7999999999999545px;height:82.0px;background:#e2e2e2;"></div>
<div style="position:absolute;left:210.8px;top:470.1px;width:20.899999999999977px;height:5.199999999999989px;background:#4e79a7;"></div>
<div style="position:absolute;left:269.3px;top:427.1px;width:20.69999999999999px;height:48.19999999999999px;background:#f28e2b;"></div>
<div style="position:absolute;left:269.3px;top:451.5px;width:20.69999999999999px;height:23.80000000000001px;background:#4e79a7;"></div>
<div style="position:absolute;left:327.9px;top:420.2px;width:20.0px;height:55.10000000000002px;background:#f1c79e;"></div>
<div style="position:absolute;left:327.9px;top:423.5px;width:20.0px;height:51.80000000000001px;background:#a0cbe8;"></div>
<div style="position:absolute;left:327.9px;top:429px;width:20.0px;height:46.30000000000001px;background:#f28e2b;"></div>
<div style="position:absolute;left:327.9px;top:466.2px;width:20.0px;height:9.100000000000023px;background:#4e79a7;"></div>
<div style="position:absolute;left:357.2px;top:439.1px;width:19.80000000000001px;height:36.19999999999999px;background:#59a14f;"></div>
<div style="position:absolute;left:444.1px;top:419.6px;width:20.299999999999955px;height:55.69999999999999px;background:#b6992d;"></div>
<div style="position:absolute;left:444.1px;top:426px;width:20.299999999999955px;height:49.30000000000001px;background:#8cd17d;"></div>
<div style="position:absolute;left:502px;top:471.8px;width:20.399999999999977px;height:3.5px;background:#8cd17d;"></div>
<div style="position:absolute;left:192.2px;top:477.40px;font-size:7px;line-height:7px;color:#333;font-weight:400;white-space:nowrap;font-family:'Liberation Sans', sans-serif;transform:translateX(-50%) scaleX(1.02);">Q1</div>
<div style="position:absolute;left:221.3px;top:477.40px;font-size:7px;line-height:7px;color:#333;font-weight:400;white-space:nowrap;font-family:'Liberation Sans', sans-serif;transform:translateX(-50%) scaleX(1.02);">Q2</div>
<div style="position:absolute;left:250.7px;top:477.40px;font-size:7px;line-height:7px;color:#333;font-weight:400;white-space:nowrap;font-family:'Liberation Sans', sans-serif;transform:translateX(-50%) scaleX(1.02);">Q3</div>
<div style="position:absolute;left:279.3px;top:477.40px;font-size:7px;line-height:7px;color:#333;font-weight:400;white-space:nowrap;font-family:'Liberation Sans', sans-serif;transform:translateX(-50%) scaleX(1.02);">Q4</div>
<div style="position:absolute;left:308.3px;top:477.40px;font-size:7px;line-height:7px;color:#333;font-weight:400;white-space:nowrap;font-family:'Liberation Sans', sans-serif;transform:translateX(-50%) scaleX(1.02);">Q1</div>
<div style="position:absolute;left:337.6px;top:477.40px;font-size:7px;line-height:7px;color:#333;font-weight:400;white-space:nowrap;font-family:'Liberation Sans', sans-serif;transform:translateX(-50%) scaleX(1.02);">Q2</div>
<div style="position:absolute;left:366.6px;top:477.40px;font-size:7px;line-height:7px;color:#333;font-weight:400;white-space:nowrap;font-family:'Liberation Sans', sans-serif;transform:translateX(-50%) scaleX(1.02);">Q3</div>
<div style="position:absolute;left:395.9px;top:477.40px;font-size:7px;line-height:7px;color:#333;font-weight:400;white-space:nowrap;font-family:'Liberation Sans', sans-serif;transform:translateX(-50%) scaleX(1.02);">Q4</div>
<div style="position:absolute;left:425.2px;top:477.40px;font-size:7px;line-height:7px;color:#333;font-weight:400;white-space:nowrap;font-family:'Liberation Sans', sans-serif;transform:translateX(-50%) scaleX(1.02);">Q1</div>
<div style="position:absolute;left:454px;top:477.40px;font-size:7px;line-height:7px;color:#333;font-weight:400;white-space:nowrap;font-family:'Liberation Sans', sans-serif;transform:translateX(-50%) scaleX(1.02);">Q2</div>
<div style="position:absolute;left:483.3px;top:477.40px;font-size:7px;line-height:7px;color:#333;font-weight:400;white-space:nowrap;font-family:'Liberation Sans', sans-serif;transform:translateX(-50%) scaleX(1.02);">Q3</div>
<div style="position:absolute;left:512.3px;top:477.40px;font-size:7px;line-height:7px;color:#333;font-weight:400;white-space:nowrap;font-family:'Liberation Sans', sans-serif;transform:translateX(-50%) scaleX(1.02);">Q4</div>
<div style="position:absolute;left:352.4px;top:487.90px;font-size:7px;line-height:7px;color:#222;font-weight:700;white-space:nowrap;font-family:'Liberation Sans', sans-serif;transform:translateX(-50%) scaleX(0.92);">Data sprzedaży</div>
<svg style="position:absolute;left:143.5px;top:493px" width="26" height="9" viewBox="0 0 26 9"><path d="M0.5 8 Q3 7.6 4.5 5 Q6.5 1 8.5 3.5 Q10 5.8 11.5 5.6 Q13 4.2 14.5 4.8 Q16.5 7.5 19 7.9 H25" stroke="#666" stroke-width="0.65" fill="none"/><path d="M4 8 Q7 7 9 4 Q11 1.8 13 4 Q15 7 18 7.8" stroke="#999" stroke-width="0.5" fill="none"/><path d="M0.5 8.3 H25" stroke="#aaa" stroke-width="0.5"/></svg>
<div style="position:absolute;left:550px;top:336px;width:354px;height:178px;box-shadow:1px 1px 0 1px #f3dcd1, 2px 2px 3px 1px rgba(246,205,188,0.5);"></div>
<div style="position:absolute;left:550px;top:336px;width:354px;height:178px;background:#fff;border:1px solid #ece4de;box-sizing:border-box;"></div>
<div style="position:absolute;left:555.3px;top:343.38px;font-size:9.3px;line-height:9.3px;color:#3a3a3a;font-weight:400;white-space:nowrap;font-family:'Liberation Sans', sans-serif;transform:scaleX(0.86);transform-origin:left center;-webkit-text-stroke:0.2px currentColor;">Procesowane faktury (od daty otrzymania po ostatnią modyfikację)</div>
<div style="position:absolute;left:551.5px;top:356.4px;width:352.1px;height:27.100000000000023px;background:#f4f4f4;"></div>
<div style="position:absolute;left:555.6px;top:367.88px;font-size:6.8px;line-height:6.8px;color:#b4b4b4;font-weight:400;white-space:nowrap;font-family:'Liberation Sans', sans-serif;transform:scaleX(0.89);transform-origin:left center;">Powiązany nabywca</div>
<div style="position:absolute;left:658.3px;top:398px;width:24.300000000000068px;height:113px;background:#f1f1f1;"></div>
<div style="position:absolute;left:800px;top:398px;width:46.60000000000002px;height:113px;background:#f1f1f1;"></div>
<div style="position:absolute;left:657.9px;top:356.4px;width:0.7999999999999545px;height:154.60000000000002px;background:#e8e8e8;"></div>
<div style="position:absolute;left:682.2px;top:356.4px;width:0.7999999999999545px;height:154.60000000000002px;background:#e8e8e8;"></div>
<div style="position:absolute;left:705.7px;top:356.4px;width:0.7999999999999545px;height:154.60000000000002px;background:#e8e8e8;"></div>
<div style="position:absolute;left:729.6px;top:356.4px;width:0.7999999999999545px;height:154.60000000000002px;background:#e8e8e8;"></div>
<div style="position:absolute;left:752.7px;top:356.4px;width:0.7999999999999545px;height:154.60000000000002px;background:#e8e8e8;"></div>
<div style="position:absolute;left:776.2px;top:356.4px;width:0.7999999999999545px;height:154.60000000000002px;background:#e8e8e8;"></div>
<div style="position:absolute;left:799.6px;top:356.4px;width:0.7999999999999545px;height:154.60000000000002px;background:#e8e8e8;"></div>
<div style="position:absolute;left:822.9px;top:356.4px;width:0.7999999999999545px;height:154.60000000000002px;background:#e8e8e8;"></div>
<div style="position:absolute;left:846.2px;top:356.4px;width:0.7999999999999545px;height:154.60000000000002px;background:#e8e8e8;"></div>
<div style="position:absolute;left:869.6px;top:356.4px;width:0.7999999999999545px;height:154.60000000000002px;background:#e8e8e8;"></div>
<div style="position:absolute;left:893.1px;top:356.4px;width:0.7999999999999545px;height:154.60000000000002px;background:#e8e8e8;"></div>
<div style="position:absolute;left:658.3px;top:370.3px;width:245.30000000000007px;height:0.6999999999999886px;background:#e8e8e8;"></div>
<div style="position:absolute;left:670.45px;top:361.12px;font-size:6.2px;line-height:6.2px;color:#ababab;font-weight:400;white-space:nowrap;font-family:'Liberation Sans', sans-serif;transform:translateX(-50%) scaleX(0.9);">niedz.</div>
<div style="position:absolute;left:670.45px;top:375.52px;font-size:6.2px;line-height:6.2px;color:#ababab;font-weight:400;white-space:nowrap;font-family:'Liberation Sans', sans-serif;transform:translateX(-50%) scaleX(0.9);">01</div>
<div style="position:absolute;left:694.35px;top:361.12px;font-size:6.2px;line-height:6.2px;color:#ababab;font-weight:400;white-space:nowrap;font-family:'Liberation Sans', sans-serif;transform:translateX(-50%) scaleX(0.9);">pon.</div>
<div style="position:absolute;left:694.35px;top:375.52px;font-size:6.2px;line-height:6.2px;color:#ababab;font-weight:400;white-space:nowrap;font-family:'Liberation Sans', sans-serif;transform:translateX(-50%) scaleX(0.9);">02</div>
<div style="position:absolute;left:718.05px;top:361.12px;font-size:6.2px;line-height:6.2px;color:#ababab;font-weight:400;white-space:nowrap;font-family:'Liberation Sans', sans-serif;transform:translateX(-50%) scaleX(0.9);">wt.</div>
<div style="position:absolute;left:718.05px;top:375.52px;font-size:6.2px;line-height:6.2px;color:#ababab;font-weight:400;white-space:nowrap;font-family:'Liberation Sans', sans-serif;transform:translateX(-50%) scaleX(0.9);">03</div>
<div style="position:absolute;left:741.55px;top:361.12px;font-size:6.2px;line-height:6.2px;color:#ababab;font-weight:400;white-space:nowrap;font-family:'Liberation Sans', sans-serif;transform:translateX(-50%) scaleX(0.9);">śr.</div>
<div style="position:absolute;left:741.55px;top:375.52px;font-size:6.2px;line-height:6.2px;color:#ababab;font-weight:400;white-space:nowrap;font-family:'Liberation Sans', sans-serif;transform:translateX(-50%) scaleX(0.9);">04</div>
<div style="position:absolute;left:764.85px;top:361.12px;font-size:6.2px;line-height:6.2px;color:#ababab;font-weight:400;white-space:nowrap;font-family:'Liberation Sans', sans-serif;transform:translateX(-50%) scaleX(0.9);">czw.</div>
<div style="position:absolute;left:764.85px;top:375.52px;font-size:6.2px;line-height:6.2px;color:#ababab;font-weight:400;white-space:nowrap;font-family:'Liberation Sans', sans-serif;transform:translateX(-50%) scaleX(0.9);">05</div>
<div style="position:absolute;left:788.3px;top:361.12px;font-size:6.2px;line-height:6.2px;color:#ababab;font-weight:400;white-space:nowrap;font-family:'Liberation Sans', sans-serif;transform:translateX(-50%) scaleX(0.9);">pt.</div>
<div style="position:absolute;left:788.3px;top:375.52px;font-size:6.2px;line-height:6.2px;color:#ababab;font-weight:400;white-space:nowrap;font-family:'Liberation Sans', sans-serif;transform:translateX(-50%) scaleX(0.9);">06</div>
<div style="position:absolute;left:811.65px;top:361.12px;font-size:6.2px;line-height:6.2px;color:#ababab;font-weight:400;white-space:nowrap;font-family:'Liberation Sans', sans-serif;transform:translateX(-50%) scaleX(0.9);">sob.</div>
<div style="position:absolute;left:811.65px;top:375.52px;font-size:6.2px;line-height:6.2px;color:#ababab;font-weight:400;white-space:nowrap;font-family:'Liberation Sans', sans-serif;transform:translateX(-50%) scaleX(0.9);">07</div>
<div style="position:absolute;left:834.95px;top:361.12px;font-size:6.2px;line-height:6.2px;color:#ababab;font-weight:400;white-space:nowrap;font-family:'Liberation Sans', sans-serif;transform:translateX(-50%) scaleX(0.9);">niedz.</div>
<div style="position:absolute;left:834.95px;top:375.52px;font-size:6.2px;line-height:6.2px;color:#ababab;font-weight:400;white-space:nowrap;font-family:'Liberation Sans', sans-serif;transform:translateX(-50%) scaleX(0.9);">08</div>
<div style="position:absolute;left:858.3px;top:361.12px;font-size:6.2px;line-height:6.2px;color:#ababab;font-weight:400;white-space:nowrap;font-family:'Liberation Sans', sans-serif;transform:translateX(-50%) scaleX(0.9);">pon.</div>
<div style="position:absolute;left:858.3px;top:375.52px;font-size:6.2px;line-height:6.2px;color:#ababab;font-weight:400;white-space:nowrap;font-family:'Liberation Sans', sans-serif;transform:translateX(-50%) scaleX(0.9);">09</div>
<div style="position:absolute;left:881.75px;top:361.12px;font-size:6.2px;line-height:6.2px;color:#ababab;font-weight:400;white-space:nowrap;font-family:'Liberation Sans', sans-serif;transform:translateX(-50%) scaleX(0.9);">wt.</div>
<div style="position:absolute;left:881.75px;top:375.52px;font-size:6.2px;line-height:6.2px;color:#ababab;font-weight:400;white-space:nowrap;font-family:'Liberation Sans', sans-serif;transform:translateX(-50%) scaleX(0.9);">10</div>
<div style="position:absolute;left:900.5px;top:375.60px;font-size:6px;line-height:6px;color:#aaa;font-weight:400;white-space:nowrap;font-family:'Liberation Sans', sans-serif;transform:scaleX(0.9);transform-origin:left center;">1</div>
<div style="position:absolute;left:551.5px;top:402.0px;width:352.1px;height:0.7999999999999545px;background:#e9e9e9;"></div>
<div style="position:absolute;left:551.5px;top:420.20000000000005px;width:352.1px;height:0.7999999999999545px;background:#e9e9e9;"></div>
<div style="position:absolute;left:551.5px;top:438.0px;width:352.1px;height:0.7999999999999545px;background:#e9e9e9;"></div>
<div style="position:absolute;left:551.5px;top:383.2px;width:352.1px;height:0.6999999999999886px;background:#e6e6e6;"></div>
<div style="position:absolute;left:657.8px;top:356.4px;width:0.8000000000000682px;height:154.60000000000002px;background:#e0e0e0;"></div>
<div style="position:absolute;left:555.6px;top:408.98px;font-size:6.8px;line-height:6.8px;color:#333;font-weight:400;white-space:nowrap;font-family:'Liberation Sans', sans-serif;transform:scaleX(0.91);transform-origin:left center;">DEMO Sp. z o.o.</div>
<div style="position:absolute;left:555.6px;top:427.08px;font-size:6.8px;line-height:6.8px;color:#333;font-weight:400;white-space:nowrap;font-family:'Liberation Sans', sans-serif;transform:scaleX(0.91);transform-origin:left center;">ASTRAFOX Sp. z o.o.</div>
<div style="position:absolute;left:555.6px;top:445.48px;font-size:6.8px;line-height:6.8px;color:#333;font-weight:400;white-space:nowrap;font-family:'Liberation Sans', sans-serif;transform:scaleX(0.95);transform-origin:left center;">Kamil Maciąg</div>
<div style="position:absolute;left:658.8px;top:385.6px;width:233.9000000000001px;height:10.599999999999966px;background:#2f7ed4;"></div>
<div style="position:absolute;left:658.8px;top:402.6px;width:69.90000000000009px;height:10.799999999999955px;background:#4a78a8;"></div>
<div style="position:absolute;left:660.6px;top:407.3px;width:1.0px;height:1.0px;background:#1e3552;"></div>
<div style="position:absolute;left:663.8px;top:405.60px;font-size:6px;line-height:6px;color:#fff;font-weight:400;white-space:nowrap;font-family:'Liberation Sans', sans-serif;transform:scaleX(0.9);transform-origin:left center;">03/11/09/2022</div>
<div style="position:absolute;left:634.1px;top:375px;width:118.79999999999995px;height:22.30000000000001px;background:#262626;border-radius:2.5px;"></div>
<div style="position:absolute;left:690.4px;top:397.2px;width:0;height:0;border-left:3.6px solid transparent;border-right:3.6px solid transparent;border-top:3.6px solid #262626;"></div>
<div style="position:absolute;left:638.5px;top:379.44px;font-size:6.4px;line-height:6.4px;color:#fff;font-weight:700;white-space:nowrap;font-family:'Liberation Sans', sans-serif;transform:scaleX(0.89);transform-origin:left center;-webkit-text-stroke:0;">Nazwa sprzedawcy: Testowy sprzedawca</div>
<div style="position:absolute;left:638.5px;top:388.14px;font-size:6.4px;line-height:6.4px;color:#fff;font-weight:700;white-space:nowrap;font-family:'Liberation Sans', sans-serif;transform:scaleX(0.89);transform-origin:left center;-webkit-text-stroke:0;">Łączna kwota brutto: 1845</div>
<svg style="position:absolute;left:669px;top:407.5px" width="8" height="10" viewBox="0 0 8 10"><path d="M2.5 0.8 Q3.3 0.3 3.8 0.9 V4.2 L6.2 5 Q7.2 5.4 7 6.5 L6.4 9.3 H2.6 L0.7 6.3 Q0.5 5.6 1.3 5.5 L2.4 6.2 Z" fill="#fff" stroke="#555" stroke-width="0.6"/></svg>
<div style="position:absolute;left:890.3px;top:336.4px;width:13.600000000000023px;height:28.200000000000045px;background:#fbe1d6;"></div>
<svg style="position:absolute;left:893.5px;top:339.8px" width="8" height="8" viewBox="0 0 8 8"><path d="M0.7 0.7 L2.8 2.8 M0.7 0.7 H2.4 M0.7 0.7 V2.4 M7.3 0.7 L5.2 2.8 M7.3 0.7 H5.6 M7.3 0.7 V2.4 M0.7 7.3 L2.8 5.2 M0.7 7.3 H2.4 M0.7 7.3 V5.6 M7.3 7.3 L5.2 5.2 M7.3 7.3 H5.6 M7.3 7.3 V5.6" stroke="#333" stroke-width="1" fill="none"/></svg>
<svg style="position:absolute;left:893.6px;top:354px" width="8" height="8" viewBox="0 0 8 8"><path d="M0.5 1.5 L2.8 0.6 L5.2 1.5 L7.5 0.6 V6.5 L5.2 7.4 L2.8 6.5 L0.5 7.4 Z" fill="#444"/><path d="M2.8 0.6 V6.5 M5.2 1.5 V7.4" stroke="#fbe1d6" stroke-width="0.6"/></svg>
<div style="position:absolute;left:659.5px;top:510.8px;width:81.20000000000005px;height:2.499999999999943px;background:#a8a8a8;border-radius:1.5px;"></div>
<div style="position:absolute;left:854.2px;top:459.2px;width:41px;height:41px;border-radius:50%;background:#fff;box-shadow:0 0.5px 3px rgba(0,0,0,0.10);"></div>
<svg style="position:absolute;left:858px;top:463px" width="34" height="34" viewBox="0 0 34 34"><defs><linearGradient id="og" x1="0" x2="1" y1="0" y2="0"><stop offset="0" stop-color="#f7c6a8"/><stop offset="0.55" stop-color="#ea6a35"/><stop offset="1" stop-color="#e0451c"/></linearGradient></defs><path d="M19.3 13.8 Q16 11.5 15.6 3 Q15.2 12.5 2.8 16.5 Q15.2 20.5 15.6 30.2 Q16 21.5 19.3 19.2" fill="none" stroke="#111" stroke-width="2" stroke-linejoin="miter" stroke-linecap="round"/><path d="M18.5 12.6 L30.6 16.5 L18.5 20.4 L22.6 16.5 Z" fill="url(#og)"/></svg>
</div></body></html>
